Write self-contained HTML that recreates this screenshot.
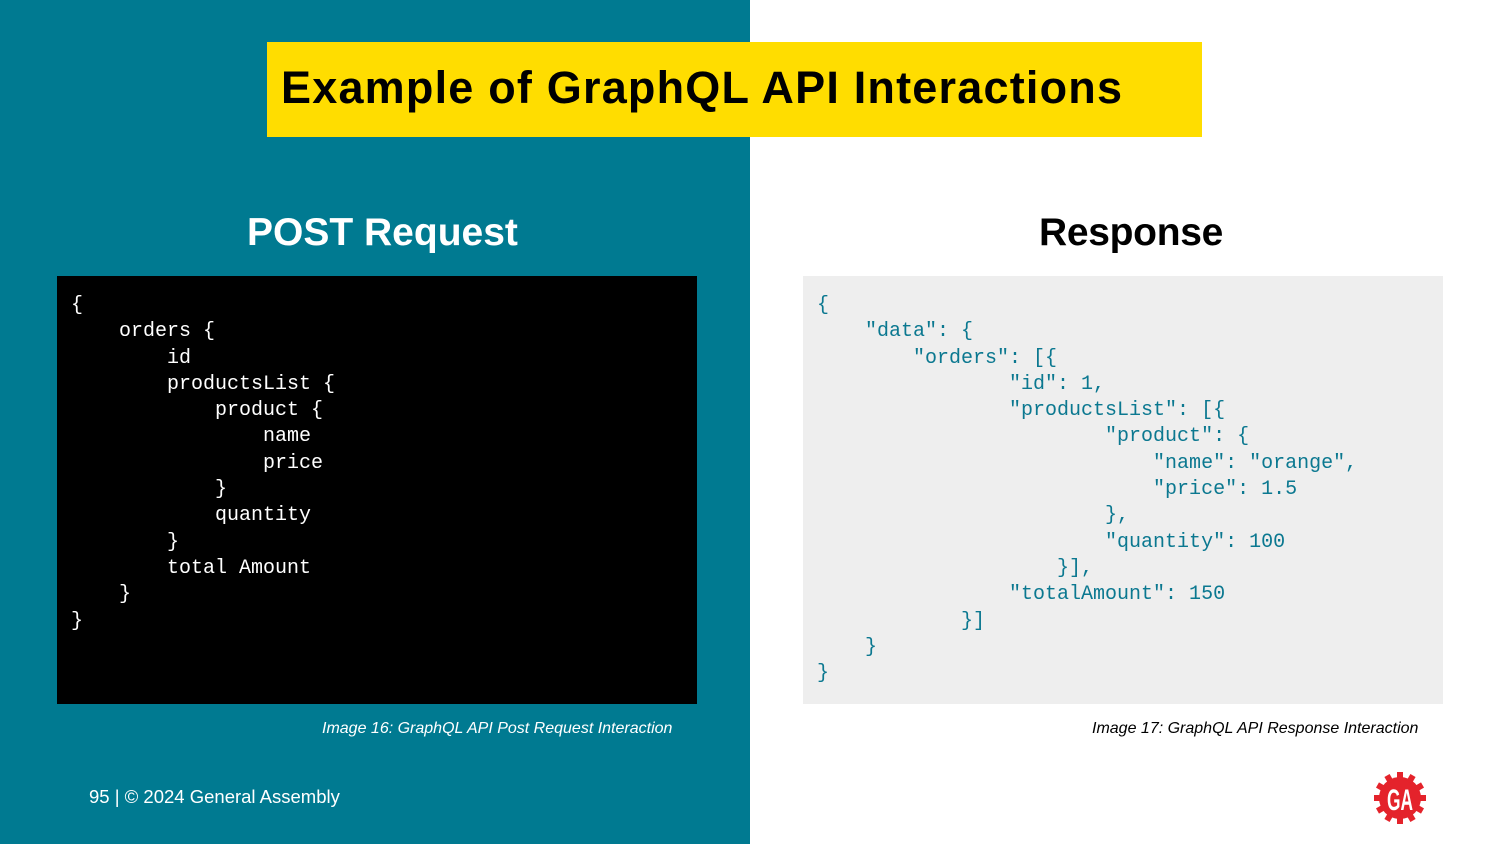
<!DOCTYPE html>
<html><head><style>
body{margin:0;width:1500px;height:844px;position:relative;overflow:hidden;background:#fff;font-family:"Liberation Sans",sans-serif}
.l{position:absolute;left:0;top:0;width:750px;height:844px;background:#007a91}
.t{position:absolute;left:267px;top:42px;width:935px;height:95px;background:#ffdd00}
.t span{position:absolute;left:14px;top:20px;font-weight:bold;font-size:45px;color:#000;letter-spacing:1.2px}
h2{position:absolute;margin:0;font-size:39px;font-weight:bold;top:211px}
pre{position:absolute;margin:0;top:276px;width:640px;height:428px;box-sizing:border-box;padding:17px 0 0 14px;font-family:"Liberation Mono",monospace;font-size:20px;line-height:26.3px}
.cap{position:absolute;top:720px;font-style:italic;font-size:16px}
</style></head><body>
<div class="l"></div>
<div class="t"><span>Example of GraphQL API Interactions</span></div>
<h2 style="left:247px;color:#fff">POST Request</h2>
<h2 style="left:1039px;color:#000;letter-spacing:-0.3px">Response</h2>
<pre style="left:57px;background:#000;color:#fff">{
    orders {
        id
        productsList {
            product {
                name
                price
            }
            quantity
        }
        total Amount
    }
}</pre>
<pre style="left:803px;background:#eeeeee;color:#0b7890">{
    "data": {
        "orders": [{
                "id": 1,
                "productsList": [{
                        "product": {
                            "name": "orange",
                            "price": 1.5
                        },
                        "quantity": 100
                    }],
                "totalAmount": 150
            }]
    }
}</pre>
<div class="cap" style="left:322px;color:#fff">Image 16: GraphQL API Post Request Interaction</div>
<div class="cap" style="left:1092px;color:#000">Image 17: GraphQL API Response Interaction</div>
<div style="position:absolute;left:89px;top:786px;color:#fff;font-size:18.5px">95 | © 2024 General Assembly</div>
<svg style="position:absolute;left:1374px;top:772px" width="52" height="52" viewBox="0 0 52 52">
<circle cx="26" cy="26" r="21" fill="#e4232b"/>
<g fill="#e4232b">
<rect x="23" y="0" width="6" height="8"/><rect x="23" y="44" width="6" height="8"/><rect x="0" y="23" width="8" height="6"/><rect x="44" y="23" width="8" height="6"/>
<rect x="23" y="0" width="6" height="8" transform="rotate(30 26 26)"/><rect x="23" y="0" width="6" height="8" transform="rotate(60 26 26)"/><rect x="23" y="0" width="6" height="8" transform="rotate(120 26 26)"/><rect x="23" y="0" width="6" height="8" transform="rotate(150 26 26)"/><rect x="23" y="0" width="6" height="8" transform="rotate(210 26 26)"/><rect x="23" y="0" width="6" height="8" transform="rotate(240 26 26)"/><rect x="23" y="0" width="6" height="8" transform="rotate(300 26 26)"/><rect x="23" y="0" width="6" height="8" transform="rotate(330 26 26)"/>
</g>
<text x="26" y="38" text-anchor="middle" fill="#fff" font-family="Liberation Sans" font-weight="bold" font-size="30" textLength="26" lengthAdjust="spacingAndGlyphs">GA</text>
</svg>
</body></html>
